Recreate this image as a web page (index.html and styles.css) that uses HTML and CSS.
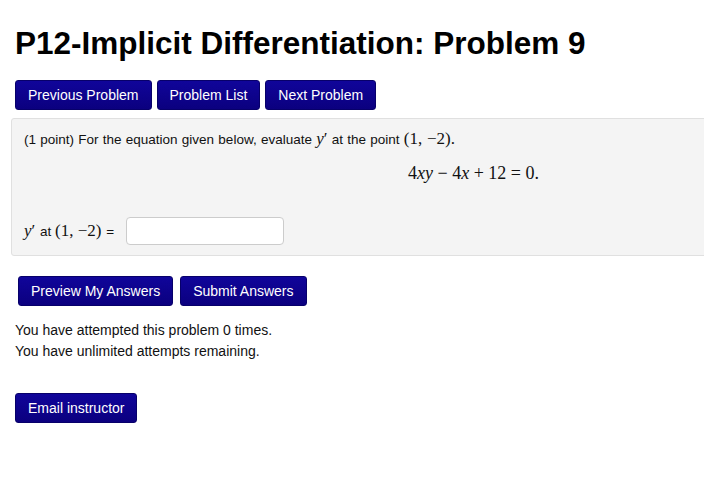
FILE: index.html
```html
<!DOCTYPE html>
<html lang="en">
<head>
  <meta charset="UTF-8">
  <title>P12-Implicit Differentiation: Problem 9</title>
  <link rel="stylesheet" href="styles.css">
</head>
<body>
  <h1>P12-Implicit Differentiation: Problem 9</h1>

  <div class="nav">
    <button class="btn">Previous Problem</button>
    <button class="btn">Problem List</button>
    <button class="btn">Next Problem</button>
  </div>

  <div class="problem">
    <p class="prompt">(1 point) For the equation given below, evaluate <span class="math"><i>y</i>&prime;</span> at the point <span class="math">(1, &minus;2).</span></p>
    <p class="equation math">4<i>xy</i> &minus; 4<i>x</i> + 12 = 0.</p>
    <div class="answer">
      <span class="math"><i>y</i>&prime;</span>&nbsp;at&nbsp;<span class="math">(1, &minus;2)</span>&nbsp;=
      <input type="text" class="answer-box">
    </div>
  </div>

  <div class="submit-row">
    <button class="btn">Preview My Answers</button>
    <button class="btn">Submit Answers</button>
  </div>

  <p class="attempts">You have attempted this problem 0 times.<br>You have unlimited attempts remaining.</p>

  <button class="btn email">Email instructor</button>
</body>
</html>
```

FILE: styles.css
```css
body {
  margin: 0;
  padding: 0 15px;
  font-family: "Liberation Sans", Arial, sans-serif;
  font-size: 13px;
  color: #111;
  background: #fff;
}

h1 {
  margin: 0;
  padding-top: 25px;
  font-size: 31.5px;
  line-height: 36px;
  font-weight: bold;
  color: #000;
}

.btn {
  height: 30px;
  padding: 0 12px;
  background: linear-gradient(#10059a, #0b007f);
  color: #fff;
  border: 1px solid #07006a;
  border-radius: 3px;
  font-family: "Liberation Sans", Arial, sans-serif;
  font-size: 14px;
  cursor: pointer;
}

.nav {
  display: flex;
  gap: 5px;
  margin-top: 19px;
}

.problem {
  margin: 8px -30px 0 -4px;
  padding: 10px 12px 10px 12px;
  background: #f4f4f4;
  border: 1px solid #e0e0e0;
  border-radius: 3px;
}

.problem p {
  margin: 0;
}

.prompt {
  font-size: 13.5px;
  line-height: 20px;
  word-spacing: 0.5px;
}

.math {
  font-family: "Liberation Serif", "Times New Roman", serif;
  font-size: 17px;
}

.equation {
  margin-top: 12px !important;
  padding-left: 384px;
  font-size: 18px;
  line-height: 22px;
}

.answer {
  display: flex;
  align-items: center;
  margin-top: 33px;
  font-size: 13.5px;
}

.answer .math {
  margin-right: 1px;
}

.answer-box {
  width: 158px;
  height: 28px;
  box-sizing: border-box;
  margin-left: 12px;
  border: 1px solid #ccc;
  border-radius: 4px;
  background: #fff;
}

.submit-row {
  display: flex;
  gap: 7px;
  margin-top: 20px;
  padding-left: 3px;
}

.attempts {
  margin: 14px 0 0;
  font-size: 14px;
  line-height: 21px;
}

.email {
  margin-top: 31px;
}
```
